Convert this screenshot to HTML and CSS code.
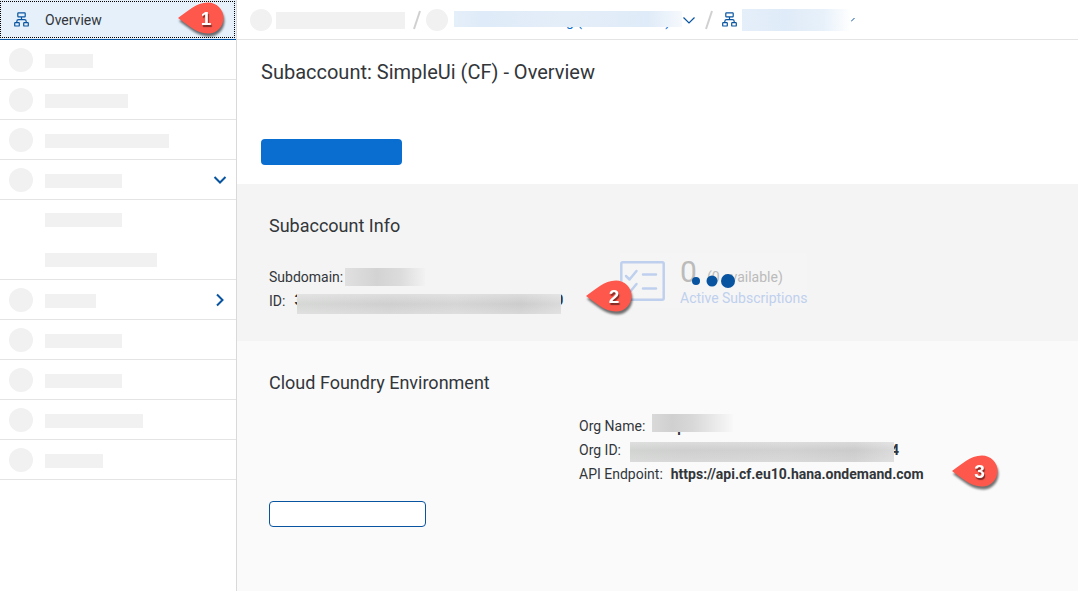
FILE: index.html
```html
<!DOCTYPE html>
<html lang="en">
<head>
<meta charset="utf-8">
<title>Subaccount: SimpleUi (CF) - Overview</title>
<link rel="stylesheet" href="styles.css">
</head>
<body>
<svg width="0" height="0" class="defs" aria-hidden="true">
  <symbol id="org" viewBox="0 0 15 15"><g fill="none" stroke="currentColor" stroke-width="1.2"><rect x="3.8" y="0.8" width="7.4" height="4" rx=".6"/><path d="M7.5 5v2.6M2.8 10.6V9.4Q2.8 7.6 4.6 7.6h5.8q1.8 0 1.8 1.8v1.2"/><rect x=".7" y="10.6" width="4.6" height="3.4" rx=".6"/><rect x="9.7" y="10.6" width="4.6" height="3.4" rx=".6"/></g></symbol>
  <symbol id="pin" viewBox="0 0 46 32"><path d="M0 16C9 10 18 .5 30 .5a15.500 15.500 0 0 1 0 31C18 31.500 9 22 0 16Z" fill="#fe574b"/></symbol>
</svg>
<div class="shell">
  <nav class="side">
    <a class="item item-active" href="#"><svg class="org"><use href="#org"/></svg><span>Overview</span><span class="marker marker-nav"><svg><use href="#pin"/></svg><b>1</b></span></a>
    <div class="item"><i class="dot"></i><i class="bar" style="width:48px"></i></div>
    <div class="item"><i class="dot"></i><i class="bar" style="width:83px"></i></div>
    <div class="item"><i class="dot"></i><i class="bar" style="width:124px"></i></div>
    <div class="item"><i class="dot"></i><i class="bar" style="width:77px"></i><button class="toggle" aria-label="Collapse"><svg viewBox="0 0 14 14"><path d="M1.500 4 7 9.500 12.500 4"/></svg></button></div>
    <div class="sub"><i class="bar" style="width:77px"></i></div>
    <div class="sub sub-last"><i class="bar" style="width:112px"></i></div>
    <div class="item"><i class="dot"></i><i class="bar" style="width:51px"></i><button class="toggle" aria-label="Expand"><svg viewBox="0 0 14 14"><path d="M4 1.500 9.500 7 4 12.500"/></svg></button></div>
    <div class="item"><i class="dot"></i><i class="bar" style="width:77px"></i></div>
    <div class="item"><i class="dot"></i><i class="bar" style="width:77px"></i></div>
    <div class="item"><i class="dot"></i><i class="bar" style="width:98px"></i></div>
    <div class="item"><i class="dot"></i><i class="bar" style="width:58px"></i></div>
  </nav>
  <main class="main">
    <div class="crumbs">
      <i class="dot dot-crumb"></i><i class="bar bar-crumb"></i>
      <svg class="slash" viewBox="0 0 8 20"><path d="M1 19 7 1"/></svg>
      <i class="dot dot-crumb"></i>
      <a class="veil veil-crumb" href="#"><span>g (</span><span>)</span></a>
      <button class="menu" aria-label="Switch subaccount"><svg viewBox="0 0 14 14"><path d="M1.500 4.500 7 10 12.500 4.500"/></svg></button>
      <svg class="slash" viewBox="0 0 8 20"><path d="M1 19 7 1"/></svg>
      <svg class="org org-crumb"><use href="#org"/></svg>
      <a class="veil veil-page" href="#" aria-label="Page"></a>
      <svg class="tick" viewBox="0 0 4 6"><path d="M0 4.500 3.500 1"/></svg>
    </div>
    <header class="head">
      <h1>Subaccount: SimpleUi (CF) - Overview</h1>
      <button class="primary" aria-label="Primary action"></button>
    </header>
    <section class="panel info">
      <h2>Subaccount Info</h2>
      <div class="info-grid">
        <div class="rows">
          <div class="row"><span>Subdomain:</span><span class="veil veil-domain"></span></div>
          <div class="row"><span>ID:</span><span class="veil veil-id"><b>3</b><b>0</b></span></div>
          <span class="marker marker-id"><svg><use href="#pin"/></svg><b>2</b></span>
        </div>
        <div class="tile">
          <svg class="board" viewBox="0 0 45 40"><g fill="none" stroke="#bfd0ee" stroke-width="2.500" stroke-linejoin="round" stroke-linecap="round"><rect x="1.300" y="1.300" width="42.400" height="37.400" rx="1.500"/><path d="m6 15 3.500 3.500 7-8.500M6 28l3.500 3.500 7-8.500M23 13.500h13M23 27.500h13"/></g></svg>
          <div class="tile-text">
            <div class="count"><span class="zero">0</span><span>(0 available)</span></div>
            <a href="#">Active Subscriptions</a>
          </div>
          <svg class="busy" viewBox="0 0 46 16"><g fill="#0854a0"><circle cx="6" cy="8" r="4"/><circle cx="22" cy="8" r="5.500"/><circle cx="38" cy="8" r="7"/></g></svg>
        </div>
      </div>
    </section>
    <section class="panel cloud">
      <h2>Cloud Foundry Environment</h2>
      <div class="rows rows-org">
        <div class="row"><span>Org Name:</span><span class="veil veil-org"><b>p</b></span></div>
        <div class="row"><span>Org ID:</span><span class="veil veil-orgid"><b>4</b></span></div>
        <div class="row"><span>API Endpoint:</span><b class="url">https://api.cf.eu10.hana.ondemand.com</b><span class="marker marker-api"><svg><use href="#pin"/></svg><b>3</b></span></div>
      </div>
      <button class="secondary" aria-label="Secondary action"></button>
    </section>
  </main>
</div>
</body>
</html>
```
FILE: styles.css
```css
* { box-sizing: border-box; }
body { margin: 0; background: #fff; color: #32363a; font: 14px/24px Roboto, "Noto Sans", sans-serif; }
.defs { position: absolute; }
svg { flex: none; display: block; }
a { color: inherit; text-decoration: none; }
button { margin: 0; padding: 0; font: inherit; }
h1, h2 { margin: 0; font-weight: 400; }

.shell { display: flex; min-height: 100vh; }
.side { flex: none; width: 237px; border-right: 1px solid #d9d9d9; }
.item { position: relative; display: flex; align-items: center; height: 40px; padding: 0 9px; gap: 12px; border-bottom: 1px solid #e4e4e4; }
.item-active { gap: 16px; padding-left: 14px; background: #e5f0fa; border-bottom-color: #0854a0; }
.item-active::after { content: ""; position: absolute; inset: 1px 1px 1px 0; border: 1px dotted #000; }
.sub { display: flex; align-items: center; height: 40px; padding-left: 45px; }
.sub-last { border-bottom: 1px solid #e4e4e4; }
.dot { flex: none; width: 24px; height: 24px; border-radius: 50%; background: #f1f1f1; }
.bar { flex: none; height: 14px; background: #f1f1f1; }
.item .bar { margin-top: 3px; }
.toggle, .menu { border: 0; background: none; }
.toggle { margin-left: auto; }
.toggle svg, .menu svg { width: 14px; height: 14px; fill: none; stroke: #0854a0; stroke-width: 2; }
.menu svg { stroke-width: 1.2; }
.org { width: 15px; height: 15px; color: #0854a0; }

.main { flex: 1; min-width: 0; display: flex; flex-direction: column; }
.crumbs { display: flex; align-items: center; height: 40px; padding-left: 13px; border-bottom: 1px solid #e4e4e4; }
.dot-crumb { width: 22px; height: 22px; }
.bar-crumb { width: 129px; height: 17px; margin: 1px 8px 0 4px; }
.slash { width: 8px; height: 20px; fill: none; stroke: #d0d0d0; stroke-width: 2; }
.slash + .dot { margin-left: 5px; }
.veil { position: relative; display: flex; flex: none; }
.veil::after { content: ""; position: absolute; inset: 0; }
.veil-crumb { width: 228px; height: 16px; margin: 0 0 2px 6px; padding: 0 12px 0 112px; justify-content: space-between; line-height: 20px; color: #0a6ed1; }
.veil-crumb::after { background: linear-gradient(90deg, #e5effa, #dfebf8 12%, #e4eef9 50%, #dfebf8 85%, #f6f9fd); }
.menu + .slash { margin: 0 9px; }
.org-crumb { margin-right: 5px; }
.veil-page { width: 109px; height: 22px; }
.veil-page::after { background: linear-gradient(90deg, #e5effa, #dfebf8 40%, #e8f1fa 75%, #fff); }
.tick { width: 4px; height: 6px; fill: none; stroke: #0854a0; }

.head { display: flex; flex-direction: column; align-items: flex-start; gap: 54px; padding: 19px 24px; }
h1 { font-size: 20px; line-height: 26px; }
.primary { width: 141px; height: 26px; border: 0; border-radius: 4px; background: #0a6ed1; }
.panel { padding: 30px 32px 28px; }
h2 { font-size: 18px; line-height: 24px; }
.info { background: #f4f4f4; }
.info-grid { display: grid; grid-template-columns: 351px 1fr; margin-top: 27px; }
.rows { position: relative; }
.row { display: flex; align-items: center; height: 24px; white-space: nowrap; }
.veil-domain { width: 80px; height: 18px; margin-left: 2px; }
.veil-domain::after { background: linear-gradient(90deg, #e0e0e0, #d3d3d3 40%, #dcdcdc 70%, #f2f2f2); }
.veil-id { width: 269px; height: 20px; margin: 5px 0 0 9px; justify-content: space-between; line-height: 12px; }
.veil-id::after { inset: 0 2px 0 3px; background: linear-gradient(rgba(244,244,244,.4), transparent 50%, rgba(244,244,244,.3)), linear-gradient(90deg, #d6d8d6, #cfcfcf 35%, #d5d5d5 60%, #cbcccb 85%, #dadada); }
.tile { position: relative; display: flex; gap: 15px; align-self: start; margin-top: -12px; justify-self: start; background: #f5f5f5; }
.board { width: 45px; height: 40px; margin-top: 8px; }
.tile-text { display: flex; flex-direction: column; color: #bbb; }
.tile-text a { color: #bfd0ee; line-height: 20px; }
.count { display: flex; align-items: baseline; gap: 10px; height: 35px; line-height: 38px; }
.zero { font-size: 30px; }
.busy { position: absolute; left: 70px; top: 20px; width: 46px; height: 16px; }

.cloud { flex: 1; background: #fafafa; }
.rows-org { margin: 19px 0 15px 310px; }
.veil-org { width: 81px; height: 18px; margin: 0 0 6px 7px; padding-left: 25px; line-height: 26px; }
.veil-org::after { background: linear-gradient(90deg, #d9d9d9, #d0d0d0 25%, #d8d8d8 50%, #f8f8f8); }
.veil-orgid { width: 269px; height: 20px; margin: 4px 0 0 9px; justify-content: flex-end; line-height: 16px; }
.veil-orgid::after { right: 5px; background: linear-gradient(rgba(250,250,250,.3), transparent 40%, rgba(250,250,250,.2)), linear-gradient(90deg, #d2d4d2, #cecfce 20%, #d1d1d1 60%, #cacbca 85%, #dadada); }
.url { margin-left: 8px; }
.secondary { display: block; width: 157px; height: 26px; border: 1px solid #0854a0; border-radius: 4px; background: #fff; }

.marker { width: 46px; height: 32px; z-index: 1; filter: drop-shadow(1px 3px 1px rgba(0,0,0,.55)); }
.marker svg { width: 46px; height: 32px; }
.marker b { position: absolute; inset: 0 0 0 10px; text-align: center; font: bold 19px/34px "Liberation Sans", sans-serif; color: #fff; text-shadow: 1px 2px 1px rgba(0,0,0,.5); }
.marker-nav { position: absolute; right: 12px; top: 2px; }
.marker-id { position: absolute; left: 317px; top: 15px; }
.marker-api { position: relative; flex: none; margin: 0 0 6px 28px; }
```
